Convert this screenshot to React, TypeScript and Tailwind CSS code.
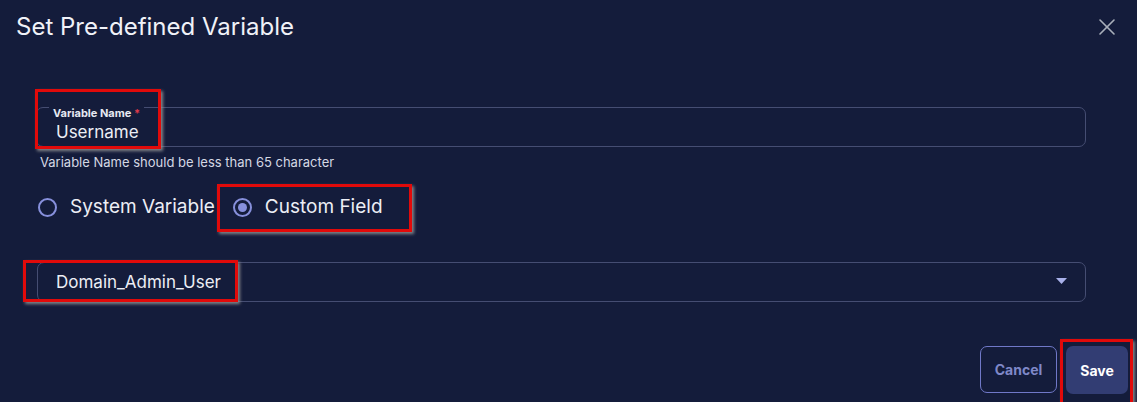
import React from 'react';
import { X } from 'lucide-react';

// Red annotation frame drawn over the screenshot content
const Marker: React.FC<{ className: string }> = ({ className }) => (
  <div
    className={`pointer-events-none absolute border-[3px] border-[#e10a0a] shadow-[2px_2px_3px_rgba(150,150,150,0.85)] ${className}`}
  />
);

const Radio: React.FC<{ checked?: boolean; label: string }> = ({ checked, label }) => (
  <label className="flex items-center">
    <span className="flex h-[19px] w-[19px] items-center justify-center rounded-full border-2 border-[#8790dc]">
      {checked && <span className="h-[9px] w-[9px] rounded-full bg-[#8790dc]" />}
    </span>
    <span className="ml-[13px] text-[19px] leading-6 text-[#eceef5]">{label}</span>
  </label>
);

export default function App() {
  return (
    <div className="relative h-[402px] w-[1137px] overflow-hidden bg-[#141c3b] font-['Inter',sans-serif] text-[#eceef5]">
      <div className="flex h-[56px] items-start justify-between pl-4 pr-4 pt-[12px]">
        <h2 className="text-[24px] leading-[30px] font-normal text-[#f0f2f8]">Set Pre-defined Variable</h2>
        <X size={28} strokeWidth={1.4} className="mt-[1px] text-[#a9afba]" />
      </div>

      <div className="relative ml-[36px] mt-[51px] flex h-[40px] w-[1050px] items-center rounded-[7px] border border-[#454d72] pl-[19px]">
        <span className="absolute -top-[1px] left-[12px] bg-[#141c3b] px-[4px] text-[11px] leading-[12px] font-bold text-[#e6e9f2]">
          Variable Name <span className="text-[#e03a4a]">*</span>
        </span>
        <span className="mt-[10px] text-[17px] leading-5">Username</span>
      </div>
      <p className="ml-[40px] mt-[7px] text-[13px] leading-4 text-[#d4d8e4]">
        Variable Name should be less than 65 character
      </p>

      <div className="ml-[38px] mt-[25px] flex h-[24px] items-center gap-[18px]">
        <Radio label="System Variable" />
        <Radio checked label="Custom Field" />
      </div>

      <div className="ml-[37px] mt-[43px] flex h-[40px] w-[1049px] items-center justify-between rounded-[7px] border border-[#454d72] pl-[18px] pr-[18px]">
        <span className="text-[17px] leading-5">Domain_Admin_User</span>
        <svg width="11" height="6" viewBox="0 0 11 6" className="mt-[-2px]">
          <path d="M0 0 L11 0 L5.5 6 Z" fill="#a9b1ea" />
        </svg>
      </div>

      <div className="mt-[44px] flex justify-end gap-[9px] pr-[9px]">
        <button className="h-[47px] w-[77px] rounded-[7px] border border-[#7078c8] text-[14px] font-bold text-[#7f88c8]">
          Cancel
        </button>
        <button className="h-[48px] w-[62px] rounded-[7px] bg-[#323d73] text-[14px] font-bold text-white">
          Save
        </button>
      </div>

      <Marker className="left-[35px] top-[89px] h-[60px] w-[126px]" />
      <Marker className="left-[217px] top-[184px] h-[48px] w-[195px]" />
      <Marker className="left-[23px] top-[260px] h-[42px] w-[215px]" />
      <Marker className="left-[1060px] top-[339px] h-[66px] w-[73px]" />
    </div>
  );
}
